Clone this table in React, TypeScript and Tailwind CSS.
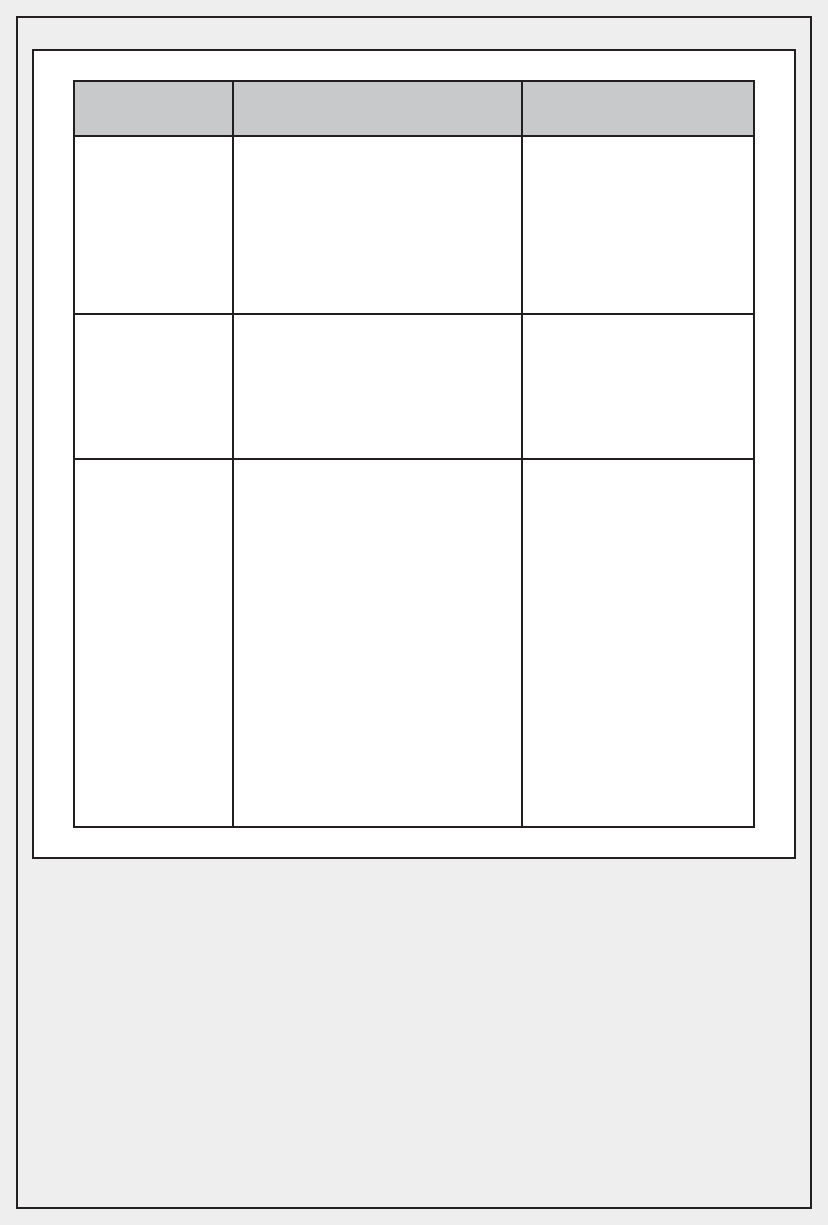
export default function App() {
  const rows = ['h-[53px]', 'h-[176px]', 'h-[143px]', 'h-[366px]']

  return (
    <div className="min-h-screen bg-[#eeeeee] p-4">
      {/* Outer frame */}
      <div className="h-[1193px] border-2 border-[#231f20] px-[14px] pt-[31px]">
        {/* White panel */}
        <div className="bg-white border-2 border-[#231f20] px-[39px] py-[29px]">
          {/* Table */}
          <div className="grid grid-cols-[157px_287px_230px] gap-[2px] p-[2px] bg-[#231f20] w-[682px]">
            {rows.map((h, r) =>
              [0, 1, 2].map((c) => (
                <div
                  key={`${r}-${c}`}
                  className={`${h} ${r === 0 ? 'bg-[#c8c9cb]' : 'bg-white'}`}
                />
              ))
            )}
          </div>
        </div>
      </div>
    </div>
  )
}
